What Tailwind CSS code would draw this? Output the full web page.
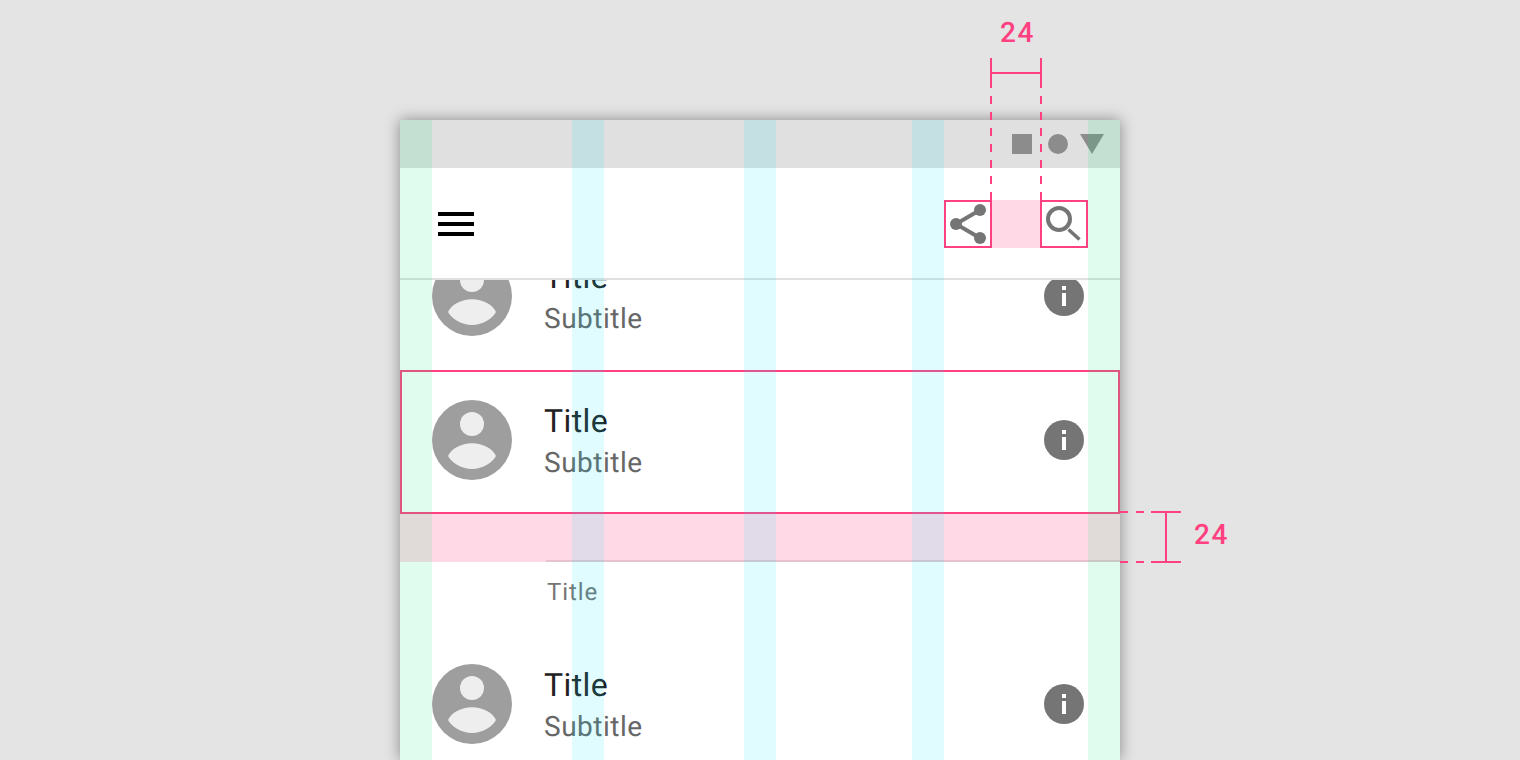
<!DOCTYPE html>
<html lang="en">
<head>
  <meta charset="UTF-8" />
  <title>Keylines and spacing</title>
  <script src="https://cdn.jsdelivr.net/npm/@tailwindcss/browser@4"></script>
</head>
<body class="relative h-[760px] w-[1520px] overflow-hidden bg-[#e4e4e4] font-['Roboto',sans-serif] [text-rendering:geometricPrecision]">
  <div class="pt-[120px] flex justify-center">
    <!-- Phone -->
    <div class="relative w-[720px] h-[640px] bg-white shadow-[0_0_14px_rgba(0,0,0,0.4)] overflow-hidden">

      <!-- Status bar -->
      <div class="relative z-10 h-[48px] bg-[#e0e0e0] flex items-center justify-end gap-[16px] pr-[16px]">
        <div class="w-[20px] h-[20px] bg-[#8c8c8c]"></div>
        <div class="w-[20px] h-[20px] rounded-full bg-[#8c8c8c] -mr-[4px]"></div>
        <svg width="24" height="20" viewBox="0 0 24 20"><path d="M0 0H24L12 20Z" fill="#8c8c8c"/></svg>
      </div>

      <!-- App bar -->
      <div class="relative z-10 h-[112px] bg-white border-b-2 border-[#e0e0e0] flex items-start justify-between pl-[38px] pr-[32px] pt-[32px]">
        <div class="mt-[12px] flex flex-col gap-[6px]">
          <div class="w-[36px] h-[4px] bg-black"></div>
          <div class="w-[36px] h-[4px] bg-black"></div>
          <div class="w-[36px] h-[4px] bg-black"></div>
        </div>
        <div class="flex">
          <div class="w-[48px] h-[48px] border-2 border-[#ff4081]">
            <svg class="-m-[2px]" width="48" height="48" viewBox="0 0 48 48" fill="#757575">
              <path d="M36 10L12 24L36 38" fill="none" stroke="#757575" stroke-width="4"/>
              <circle cx="36" cy="10" r="6"/><circle cx="12" cy="24" r="6"/><circle cx="36" cy="38" r="6"/>
            </svg>
          </div>
          <div class="w-[48px] h-[48px] bg-[#ff4081]/20"></div>
          <div class="w-[48px] h-[48px] border-2 border-[#ff4081]">
            <svg class="-m-[2px]" width="48" height="48" viewBox="0 0 48 48" fill="none" stroke="#757575" stroke-width="4">
              <circle cx="19" cy="19" r="11"/>
              <path d="M28.5 29.5L39.5 39.5" stroke-width="3.5"/>
            </svg>
          </div>
        </div>
      </div>

      <!-- List, runs under the app bar -->
      <div class="-mt-[56px]">
        <div class="h-[144px] flex items-center pl-[32px] pr-[36px]">
          <svg class="shrink-0" width="80" height="80" viewBox="0 0 80 80">
            <circle cx="40" cy="40" r="40" fill="#9e9e9e"/>
            <circle cx="40" cy="24" r="12" fill="#eeeeee"/>
            <path d="M16 56C19 49 29 43.3 40 43.3C51 43.3 61 49 64 56C61 62 51 69 40 69C29 69 19 62 16 56Z" fill="#eeeeee"/>
          </svg>
          <div class="ml-[32px] mt-[2px] flex-1">
            <div class="text-[32px] leading-[42px] tracking-[0.4px] text-[#212121]">Title</div>
            <div class="mt-[2px] text-[28px] leading-[38px] tracking-[0.5px] text-[#666666]">Subtitle</div>
          </div>
          <svg width="40" height="40" viewBox="0 0 40 40">
            <circle cx="20" cy="20" r="20" fill="#757575"/>
            <path d="M18 10H22V14H18ZM18 17H22V30H18Z" fill="#ffffff"/>
          </svg>
        </div>

        <div class="relative h-[144px] flex items-center pl-[32px] pr-[36px]">
          <div class="absolute inset-x-0 top-[2px] -bottom-[2px] border-2 border-[#ff4081]"></div>
          <svg class="shrink-0" width="80" height="80" viewBox="0 0 80 80">
            <circle cx="40" cy="40" r="40" fill="#9e9e9e"/>
            <circle cx="40" cy="24" r="12" fill="#eeeeee"/>
            <path d="M16 56C19 49 29 43.3 40 43.3C51 43.3 61 49 64 56C61 62 51 69 40 69C29 69 19 62 16 56Z" fill="#eeeeee"/>
          </svg>
          <div class="ml-[32px] mt-[2px] flex-1">
            <div class="text-[32px] leading-[42px] tracking-[0.4px] text-[#212121]">Title</div>
            <div class="mt-[2px] text-[28px] leading-[38px] tracking-[0.5px] text-[#666666]">Subtitle</div>
          </div>
          <svg width="40" height="40" viewBox="0 0 40 40">
            <circle cx="20" cy="20" r="20" fill="#757575"/>
            <path d="M18 10H22V14H18ZM18 17H22V30H18Z" fill="#ffffff"/>
          </svg>
        </div>

        <!-- 24 gap and divider -->
        <div class="h-[50px] pt-[48px] bg-[#ff4081]/20">
          <div class="ml-[146px] h-[2px] bg-black/10"></div>
        </div>

        <div class="h-[70px] pl-[147px] pt-[15px] text-[24px] leading-[30px] tracking-[0.9px] text-[#757575]">Title</div>

        <div class="h-[144px] flex items-center pl-[32px] pr-[36px]">
          <svg class="shrink-0" width="80" height="80" viewBox="0 0 80 80">
            <circle cx="40" cy="40" r="40" fill="#9e9e9e"/>
            <circle cx="40" cy="24" r="12" fill="#eeeeee"/>
            <path d="M16 56C19 49 29 43.3 40 43.3C51 43.3 61 49 64 56C61 62 51 69 40 69C29 69 19 62 16 56Z" fill="#eeeeee"/>
          </svg>
          <div class="ml-[32px] mt-[2px] flex-1">
            <div class="text-[32px] leading-[42px] tracking-[0.4px] text-[#212121]">Title</div>
            <div class="mt-[2px] text-[28px] leading-[38px] tracking-[0.5px] text-[#666666]">Subtitle</div>
          </div>
          <svg width="40" height="40" viewBox="0 0 40 40">
            <circle cx="20" cy="20" r="20" fill="#757575"/>
            <path d="M18 10H22V14H18ZM18 17H22V30H18Z" fill="#ffffff"/>
          </svg>
        </div>
      </div>

      <!-- Keyline columns -->
      <div class="absolute z-20 inset-y-0 left-0 w-[32px] bg-[#00e676]/12"></div>
      <div class="absolute z-20 inset-y-0 left-[172px] w-[32px] bg-[#00e5ff]/12"></div>
      <div class="absolute z-20 inset-y-0 left-[344px] w-[32px] bg-[#00e5ff]/12"></div>
      <div class="absolute z-20 inset-y-0 left-[512px] w-[32px] bg-[#00e5ff]/12"></div>
      <div class="absolute z-20 inset-y-0 right-0 w-[32px] bg-[#00e676]/12"></div>
    </div>
  </div>

  <!-- Measurements -->
  <svg class="absolute inset-0 z-30 pointer-events-none" width="1520" height="760" fill="none" stroke="#ff4081" stroke-width="2">
    <path d="M991 58V88M1041 58V88M991 73H1041"/>
    <path d="M991 96V200M1041 96V200" stroke-dasharray="8 8"/>
    <path d="M1120 512H1128M1136 512H1144M1120 562H1128M1136 562H1144"/>
    <path d="M1151 512H1181M1151 562H1181M1166 512V562"/>
  </svg>
  <div class="absolute z-30 left-[1000px] top-[16px] text-[28px] leading-[33px] font-medium tracking-[1.5px] text-[#ff4081]">24</div>
  <div class="absolute z-30 left-[1194px] top-[518px] text-[28px] leading-[33px] font-medium tracking-[1.5px] text-[#ff4081]">24</div>
</body>
</html>
